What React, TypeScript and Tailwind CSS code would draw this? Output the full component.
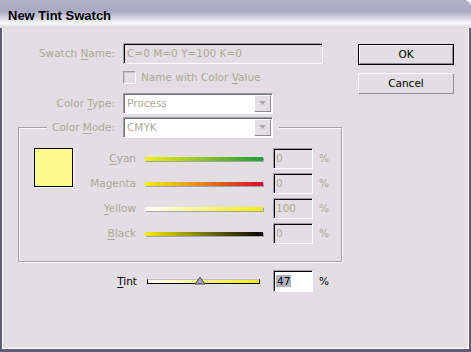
const sunken =
  "border border-t-[#9f9ea6] border-l-[#9f9ea6] border-r-white border-b-white shadow-[inset_1px_1px_0_#000]";
const grayText = "text-[#aca899]";

const channels = [
  { pre: "", u: "C", rest: "yan", value: "0", bar: "bg-[linear-gradient(to_right,#f6ef00,#1e9a3e)]" },
  { pre: "Magenta", u: "", rest: "", value: "0", bar: "bg-[linear-gradient(to_right,#f6ef00,#d40f2a)]" },
  { pre: "", u: "Y", rest: "ellow", value: "100", bar: "bg-[linear-gradient(to_right,#ffffff,#f6ef00)]" },
  { pre: "", u: "B", rest: "lack", value: "0", bar: "bg-[linear-gradient(to_right,#f6ef00,#000000)]" },
];

function Label({ pre = "", u = "", rest = "" }: { pre?: string; u?: string; rest?: string }) {
  return (
    <>
      {pre}
      {u && <span className="underline underline-offset-2">{u}</span>}
      {rest}
    </>
  );
}

function Combo({ value }: { value: string }) {
  return (
    <div className={`ml-[8px] w-[150px] h-[21px] bg-white flex items-stretch ${sunken} shadow-[inset_1px_1px_0_#707070]`}>
      <span className={`flex-1 pl-[3px] flex items-center ${grayText}`}>{value}</span>
      <div className="w-[17px] my-[1px] mr-[1px] bg-[#e3dee3] border border-t-white border-l-white border-r-[#8a8a92] border-b-[#8a8a92] flex items-center justify-center">
        <svg width="8" height="5" viewBox="0 0 8 5">
          <polygon points="0,0 7,0 3.5,4" fill="#a8a8b0" />
        </svg>
      </div>
    </div>
  );
}

function Button({ label, isDefault }: { label: string; isDefault?: boolean }) {
  return (
    <div className={`w-[96px] h-[21px] ${isDefault ? "border border-black" : ""}`}>
      <div className="w-full h-full bg-[#e3dee3] border border-t-white border-l-white border-r-[#8d8d95] border-b-[#8d8d95] flex items-center justify-center text-black">
        {label}
      </div>
    </div>
  );
}

export default function App() {
  return (
    <div
      className="w-[471px] h-[352px] bg-[#5d5d78] flex flex-col overflow-hidden rounded-tr-[8px] text-[10.5px] leading-none"
      style={{ fontFamily: '"DejaVu Sans", Verdana, sans-serif' }}
    >
      <div className="h-[28px] shrink-0 rounded-tr-[8px] bg-[linear-gradient(to_bottom,#b4b4ca_0%,#a8a8c2_40%,#d6d6e2_66%,#fbfbfd_84%,#d2d2da_100%)] flex items-center pl-[8px] pt-[2px]">
        <span
          className="text-[13px] font-bold text-black"
          style={{ fontFamily: '"Liberation Sans", Arial, sans-serif' }}
        >
          New Tint Swatch
        </span>
      </div>

      <div className="flex-1 ml-[2px] mr-[2px] mb-[3px] bg-[#e3dee3] border-l border-r border-b border-white flex">
        <div className="w-[355px] pt-[15px] flex flex-col">
          <div className="flex items-center">
            <span className={`w-[112px] text-right ${grayText}`}>
              <Label pre="Swatch " u="N" rest="ame:" />
            </span>
            <div className={`ml-[8px] w-[200px] h-[21px] pl-[3px] flex items-center ${sunken} ${grayText}`}>
              C=0 M=0 Y=100 K=0
            </div>
          </div>

          <div className="flex items-center mt-[7px] pl-[120px]">
            <div className={`w-[13px] h-[13px] ${sunken} shadow-[inset_1px_1px_0_#c9c5c8]`} />
            <span className={`ml-[5px] ${grayText}`}>
              <Label pre="Name with Color " u="V" rest="alue" />
            </span>
          </div>

          <div className="flex items-center mt-[9px]">
            <span className={`w-[112px] text-right ${grayText}`}>
              <Label pre="Color " u="T" rest="ype:" />
            </span>
            <Combo value="Process" />
          </div>

          <fieldset className="ml-[15px] mt-[3px] w-[324px] border border-[#a2a0aa] shadow-[inset_1px_1px_0_#fff,1px_1px_0_#fff] pt-[10px] pb-[17px]">
            <legend className="ml-[28px] bg-[#e3dee3]">
              <div className="flex items-center pr-[6px]">
                <span className={`w-[68px] text-right ${grayText}`}>
                  <Label pre="Color " u="M" rest="ode:" />
                </span>
                <Combo value="CMYK" />
              </div>
            </legend>
            <div className="flex">
              <div className="ml-[15px] w-[39px] h-[39px] bg-[#fdfb8f] border border-black shadow-[1px_1px_0_#fff]" />
              <div className="flex flex-col gap-[4px]">
                {channels.map((c) => (
                  <div key={c.value + c.rest + c.pre} className="flex items-center h-[21px]">
                    <span className={`w-[63px] text-right ${grayText}`}>
                      <Label pre={c.pre} u={c.u} rest={c.rest} />
                    </span>
                    <div className={`ml-[9px] w-[118px] h-[4px] ${c.bar} shadow-[1px_1px_0_#a4a2aa]`} />
                    <div className={`ml-[10px] w-[40px] h-[21px] pl-[2px] flex items-center ${sunken} ${grayText}`}>
                      {c.value}
                    </div>
                    <span className={`ml-[6px] ${grayText}`}>%</span>
                  </div>
                ))}
              </div>
            </div>
          </fieldset>

          <div className="flex items-center mt-[8px] h-[22px]">
            <span className="w-[134px] text-right text-black">
              <Label u="T" rest="int" />
            </span>
            <div className="ml-[10px] w-[113px] h-[5px] relative border-t border-t-[#bdbdc4] border-l border-r border-b border-l-black border-r-black border-b-black bg-[linear-gradient(to_right,#ffffff,#f4ef00)]">
              <svg
                className="absolute left-[47%] -translate-x-1/2 bottom-[-2px]"
                width="11"
                height="8"
                viewBox="0 0 11 8"
              >
                <polygon points="5.5,0.5 10.5,7 0.5,7" fill="#a4a4ac" stroke="#404048" strokeWidth="1" />
              </svg>
            </div>
            <div className={`ml-[13px] w-[40px] h-[22px] bg-white pl-[2px] flex items-center ${sunken}`}>
              <span className="bg-[#b4b4c0] text-black px-[1px] py-[1px]">47</span>
            </div>
            <span className="ml-[6px] text-black">%</span>
          </div>
        </div>

        <div className="pt-[16px] flex flex-col gap-[8px]">
          <Button label="OK" isDefault />
          <Button label="Cancel" />
        </div>
      </div>
    </div>
  );
}
